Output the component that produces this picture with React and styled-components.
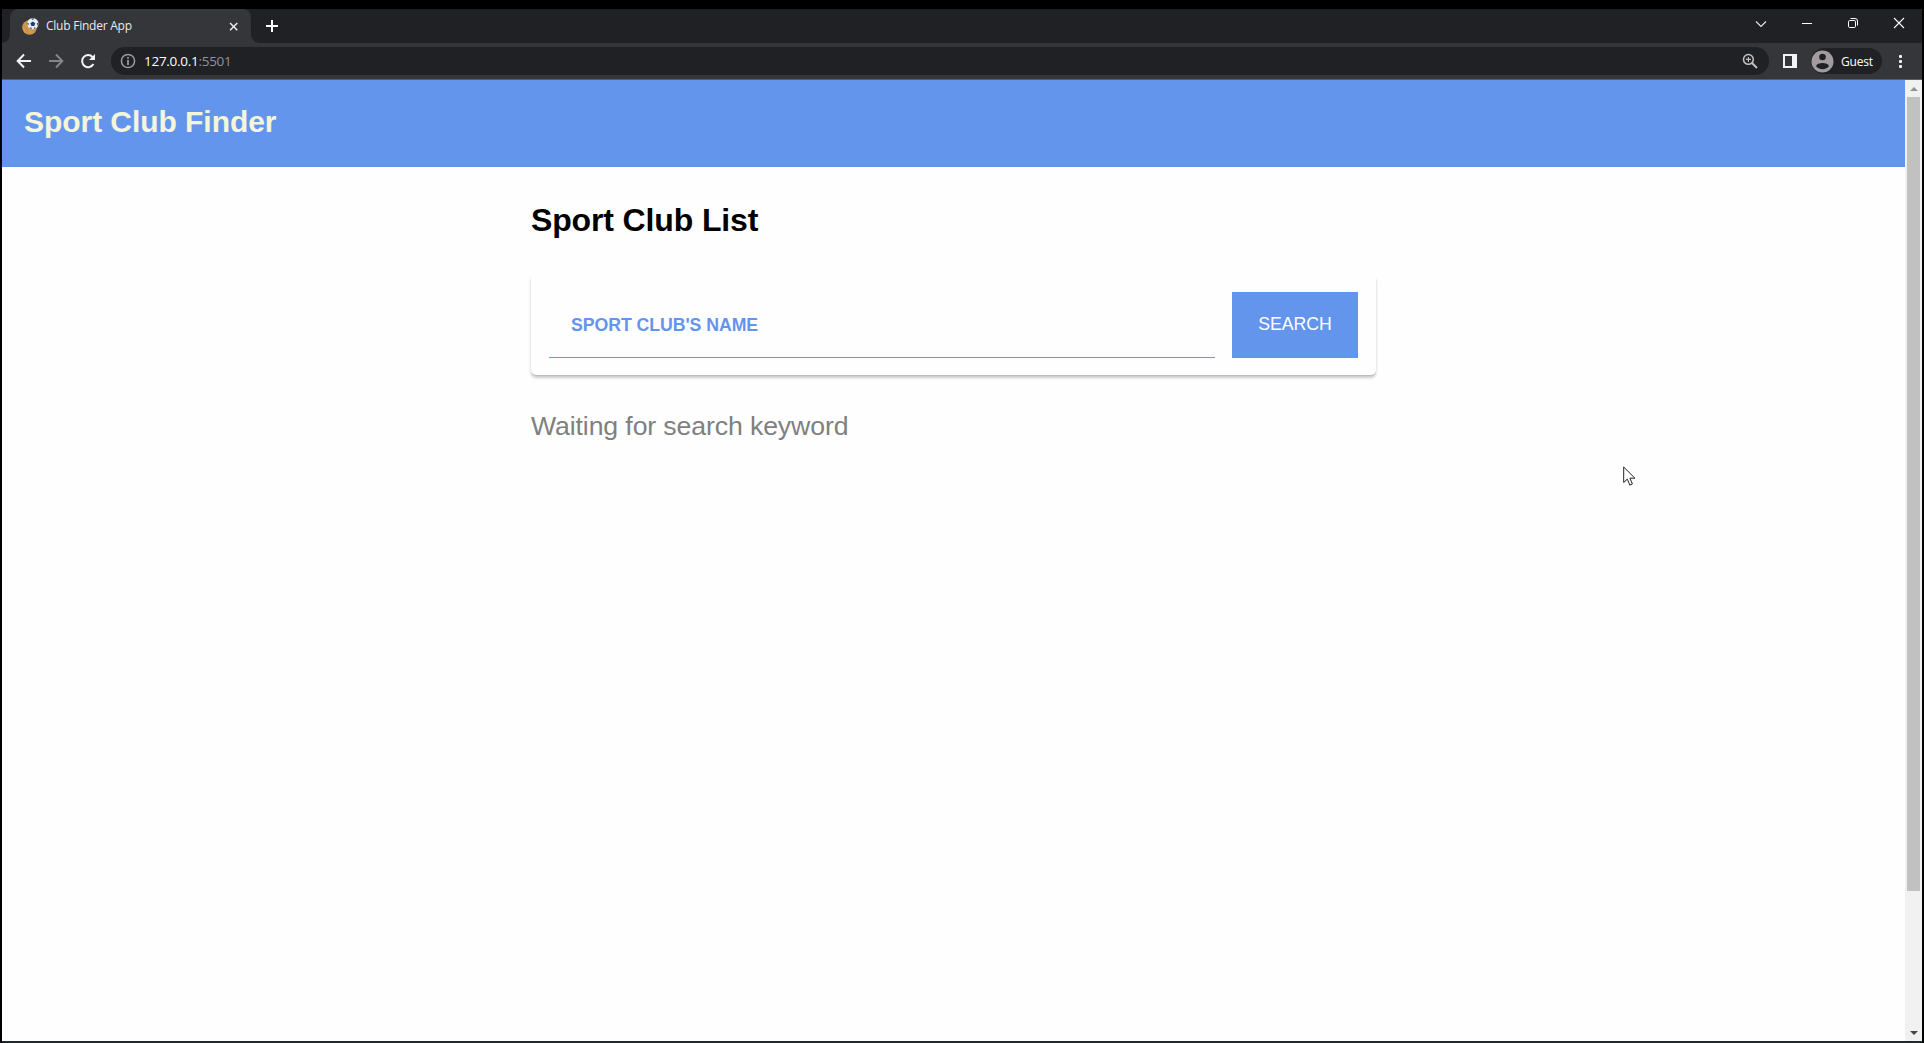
import React from "react";
import styled, { createGlobalStyle } from "styled-components";

const BLUE = "#6495ed";
const ARIAL = `"Liberation Sans", Arial, sans-serif`;
const UI = `"Open Sans", "Noto Sans", sans-serif`;

const Global = createGlobalStyle`
  *, *::before, *::after { box-sizing: border-box; }
  body { margin: 0; background: #000; }
`;

const Desktop = styled.div`
  width: 100%;
  height: 1043px;
  padding: 9px 2px 0;
  background: #000;
  overflow: hidden;
`;

const Window = styled.div`
  display: flex;
  flex-direction: column;
  height: 1034px;
  background: #202124;
  border-bottom: 2px solid #22292d;
  font-family: ${UI};
`;

const TitleBar = styled.div`
  display: flex;
  height: 34px;
  padding-left: 8px;
`;

const Tab = styled.div`
  position: relative;
  display: flex;
  align-items: center;
  width: 241px;
  height: 34px;
  padding: 0 12px 0 12px;
  border-radius: 8px 8px 0 0;
  background: #35363a;
  color: #e8eaed;
  font-size: 12px;

  &::before, &::after {
    content: "";
    position: absolute;
    bottom: 0;
    width: 8px;
    height: 8px;
  }
  &::before {
    left: -8px;
    background: radial-gradient(circle at 0 0, transparent 7.5px, #35363a 8px);
  }
  &::after {
    right: -8px;
    background: radial-gradient(circle at 100% 0, transparent 7.5px, #35363a 8px);
  }
`;

const TabTitle = styled.span`
  flex: 1;
  margin-left: 7px;
  letter-spacing: -0.24px;
  line-height: 34px;
  white-space: nowrap;
`;

const NewTab = styled.div`
  display: flex;
  margin: 11px 0 0 15px;
`;

const WindowControls = styled.div`
  display: flex;
  margin: 8px 17px 0 auto;
  gap: 34px;
`;

const Toolbar = styled.div`
  display: flex;
  align-items: center;
  height: 37px;
  padding: 0 16px 0 14px;
  background: #35363a;
  border-bottom: 1px solid #5b5c5f;
`;

const NavButtons = styled.div`
  display: flex;
  gap: 16px;
`;

const AddressBar = styled.div`
  display: flex;
  align-items: center;
  flex: 1;
  height: 28px;
  margin-left: 15px;
  padding: 0 11px 0 9px;
  border-radius: 14px;
  background: #202124;
`;

const Url = styled.span`
  flex: 1;
  margin-left: 8px;
  color: #fff;
  font-size: 13.5px;
  letter-spacing: -0.28px;
  line-height: 28px;
`;

const Port = styled.span`
  color: #8f949b;
`;

const PanelIcon = styled.div`
  width: 14px;
  height: 14px;
  margin: 0 14px 0 14px;
  border: 2px solid #f1f3f4;
  border-right-width: 5px;
`;

const Guest = styled.div`
  display: flex;
  align-items: center;
  width: 71px;
  height: 26px;
  border-radius: 13px;
  background: #202124;
  color: #fff;
  font-size: 12px;
  letter-spacing: -0.2px;
  gap: 7px;
`;

const MenuDots = styled.div`
  display: grid;
  gap: 2px;
  margin-left: 17px;
  margin-right: 4px;
  span { width: 3px; height: 3px; border-radius: 1px; background: #f1f3f4; }
`;

const Viewport = styled.div`
  display: flex;
  flex: 1;
  min-height: 0;
  background: #fff;
`;

const Page = styled.div`
  flex: 1;
  font-family: ${ARIAL};
  background: #fefefe;
`;

const Header = styled.header`
  height: 87px;
  padding: 24px 22px;
  background: ${BLUE};
`;

const Brand = styled.h1`
  margin: 0;
  color: beige;
  font-size: 30px;
  letter-spacing: -0.05px;
  line-height: 35px;
`;

const Main = styled.main`
  width: 845px;
  margin: 0 auto;
  padding-top: 35px;
`;

const Title = styled.h2`
  margin: 0;
  color: #000;
  font-size: 32px;
  letter-spacing: -0.14px;
  line-height: 36px;
`;

const SearchBox = styled.form`
  display: flex;
  align-items: flex-start;
  gap: 17px;
  height: 101px;
  margin-top: 36px;
  padding: 18px 18px 0;
  border-radius: 5px;
  box-shadow: 0 3px 3px rgba(0, 0, 0, 0.2), 0 1px 1px rgba(0, 0, 0, 0.08);
  background: #fefefe;
`;

const SearchInput = styled.input`
  flex: 1;
  min-width: 0;
  height: 66px;
  padding: 1px 22px 0;
  border: 0;
  border-bottom: 1px solid ${BLUE};
  outline: 0;
  background: transparent;
  color: ${BLUE};
  font: bold 17.7px ${ARIAL};

  &::placeholder { color: ${BLUE}; opacity: 1; text-transform: uppercase; letter-spacing: -0.05px; }
`;

const SearchButton = styled.button`
  width: 126px;
  height: 66px;
  padding: 0 0 2px;
  border: 0;
  background: ${BLUE};
  color: #fff;
  font: 17.7px ${ARIAL};
  text-transform: uppercase;
`;

const Status = styled.p`
  margin: 36px 0 0;
  color: #808080;
  font-size: 26.67px;
  letter-spacing: -0.12px;
  line-height: 30px;
`;

const ScrollBar = styled.div`
  display: flex;
  flex-direction: column;
  align-items: center;
  width: 17px;
  background: #f1f1f1;
`;

const ScrollArrow = styled.div`
  display: flex;
  align-items: center;
  justify-content: center;
  height: 17px;
  &::before {
    content: "";
    border: 4px solid transparent;
    border-top-width: ${(p) => (p.$up ? 0 : 4)}px;
    border-bottom-width: ${(p) => (p.$up ? 4 : 0)}px;
    border-top-color: ${(p) => (p.$up ? "transparent" : "#40474b")};
    border-bottom-color: ${(p) => (p.$up ? "#929292" : "transparent")};
  }
`;

const ScrollThumb = styled.div`
  width: 13px;
  height: 794px;
  margin-bottom: auto;
  background: #c1c1c1;
`;

const Pointer = styled.svg`
  position: absolute;
  left: 1623px;
  top: 466px;
`;

const Line = ({ size = 16, color = "#f1f3f4", width = 2, children }) => (
  <svg width={size} height={size} viewBox="0 0 16 16" fill="none" stroke={color} strokeWidth={width}>
    {children}
  </svg>
);

const Favicon = () => (
  <svg width="17" height="17" viewBox="0 0 17 17">
    <circle cx="7.5" cy="9.5" r="7.3" fill="#d39a4e" />
    <path d="M1 7q4 2 5 9M4 4q1 7 9 9" stroke="#bb8743" fill="none" />
    <circle cx="10.8" cy="5.8" r="5.7" fill="#e9eef6" />
    <path d="m10.8 3.4 2.4 1.8-.9 2.8H9.4l-1-2.8z" fill="#263b61" />
    <path d="M9 .5h3.5L10.8 2zM5.2 4.5l1.6 1L6 8zM16.3 4.5l-1.6 1 .7 2.5zM7.4 10l1.700-.7.9 2zM14 10l-1.600-.7-.8 2z" fill="#263b61" />
  </svg>
);

export default function App() {
  return (
    <Desktop>
      <Global />
      <Window>
        <TitleBar>
          <Tab>
            <Favicon />
            <TabTitle>Club Finder App</TabTitle>
            <Line size={11}><path d="M3 3l10.500 10.500M13.500 3 3 13.500" /></Line>
          </Tab>
          <NewTab>
            <svg width="12" height="12" viewBox="0 0 12 12" stroke="#fff" strokeWidth="2"><path d="M6 0v12M0 6h12" /></svg>
          </NewTab>
          <WindowControls>
            <svg width="12" height="12" viewBox="0 0 12 12" fill="none" stroke="#e8eaed" strokeWidth="1.1"><path d="m1 4.500 5 5 5-5" /></svg>
            <svg width="12" height="12" viewBox="0 0 12 12" stroke="#fff"><path d="M1 6.500h10" /></svg>
            <svg width="12" height="12" viewBox="0 0 12 12" fill="none" stroke="#fff"><rect x="1.5" y="3.5" width="7" height="7" rx="1.2" /><path d="M3.500 1.500H8A2.500 2.500 0 0 1 10.500 4v4.500" /></svg>
            <svg width="12" height="12" viewBox="0 0 12 12" stroke="#fff" strokeWidth="1.1"><path d="m1 1 10 10M11 1 1 11" /></svg>
          </WindowControls>
        </TitleBar>
        <Toolbar>
          <NavButtons>
            <Line><path d="M15 8H2M8 1.500 1.700 8 8 14.500" /></Line>
            <Line color="#85868a"><path d="M1 8h13M8 1.500 14.300 8 8 14.500" /></Line>
            <Line><path d="M13.400 11A6 6 0 1 1 12.500 4L14.300 6" /><path d="M15 1v6H9z" fill="#f1f3f4" stroke="none" /></Line>
          </NavButtons>
          <AddressBar>
            <Line color="#a09a9c" width={1.5}><circle cx="8" cy="8" r="6.6" /><path d="M8 7v5M8 4v1.800" strokeWidth="1.8" /></Line>
            <Url>127.0.0.1<Port>:5501</Port></Url>
            <Line color="#c5c0c0" width={1.5}><circle cx="6.4" cy="6.4" r="4.9" /><path d="m10 10 5 5" strokeWidth="2" /><path d="M3.900 6.400h5M6.400 3.900v5" strokeWidth="1.2" /></Line>
          </AddressBar>
          <PanelIcon />
          <Guest>
            <svg width="23" height="23" viewBox="0 0 23 23"><circle cx="11.5" cy="11.5" r="11" fill="#a39c9e" /><circle cx="11.5" cy="7" r="3.3" fill="#202124" /><path d="M5 16c1-4 12-4 13 0-2.500 4.200-10.500 4.200-13 0z" fill="#202124" /></svg>
            Guest
          </Guest>
          <MenuDots><span /><span /><span /></MenuDots>
        </Toolbar>
        <Viewport>
          <Page>
            <Header><Brand>Sport Club Finder</Brand></Header>
            <Main>
              <Title>Sport Club List</Title>
              <SearchBox>
                <SearchInput placeholder="Sport club's name" />
                <SearchButton type="button">Search</SearchButton>
              </SearchBox>
              <Status>Waiting for search keyword</Status>
            </Main>
          </Page>
          <ScrollBar>
            <ScrollArrow $up />
            <ScrollThumb />
            <ScrollArrow />
          </ScrollBar>
        </Viewport>
      </Window>
      <Pointer width="13" height="21" viewBox="0 0 13 21">
        <path d="M.7 1v15.500l3.600-3.400 2.500 6 2.600-1.100-2.500-5.800h5z" fill="#fff" stroke="#222" />
      </Pointer>
    </Desktop>
  );
}
